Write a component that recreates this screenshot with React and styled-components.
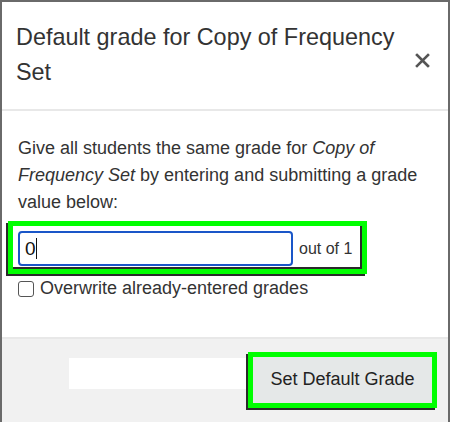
import React from "react";
import styled, { createGlobalStyle } from "styled-components";

const Global = createGlobalStyle`
  * { box-sizing: border-box; }
  body {
    margin: 0;
    background: #fff;
    font-family: "Liberation Sans", Arial, sans-serif;
  }
`;

const Modal = styled.div`
  width: 450px;
  height: 422px;
  display: flex;
  flex-direction: column;
  border: 2px solid #6a6a6a;
  border-bottom: none;
  background: #fff;
  overflow: hidden;
`;

const Header = styled.div`
  display: flex;
  align-items: center;
  justify-content: space-between;
  padding: 18px 18px 19px 14px;
  border-bottom: 2px solid #e8e8e8;
`;

const Title = styled.h4`
  margin: 0;
  font-size: 23.4px;
  line-height: 35px;
  font-weight: normal;
  color: #333;
  width: 390px;
`;

const Close = styled.button`
  border: none;
  background: none;
  padding: 0;
  margin-top: 10px;
  display: grid;
  place-items: center;
  color: #555;
  cursor: pointer;
`;

const Body = styled.div`
  padding: 24px 6px 0 6px;
  flex: 1;
`;

const Text = styled.p`
  margin: 0 0 5px 10px;
  font-size: 18px;
  line-height: 27px;
  color: #333;
`;

const Highlight = styled.div`
  border: 5px solid #00ff00;
  box-shadow: -2px 2px 0 #2a2a2a, inset -2px -2px 0 #2a2a2a;
  display: flex;
  align-items: center;
`;

const GradeRow = styled(Highlight)`
  width: 359px;
  padding: 5px 0 3px 5px;
  gap: 6px;
`;

const GradeInput = styled.div`
  width: 275px;
  height: 35px;
  border: 2px solid #1a56c8;
  border-radius: 4px;
  display: flex;
  align-items: center;
  padding-left: 5px;
  font-size: 19px;
  color: #111;
`;

const Caret = styled.span`
  display: inline-block;
  width: 1px;
  height: 21px;
  background: #111;
`;

const OutOf = styled.span`
  font-size: 16px;
  color: #333;
`;

const CheckRow = styled.label`
  display: flex;
  align-items: center;
  gap: 6px;
  margin: 4px 0 0 10px;
  font-size: 18px;
  color: #333;
`;

const Box = styled.span`
  width: 16px;
  height: 16px;
  border: 1px solid #555;
  border-radius: 3px;
  background: #fff;
`;

const Footer = styled.div`
  height: 85px;
  background: #f1f1f1;
  border-top: 2px solid #e8e8e8;
  display: flex;
  justify-content: flex-end;
  align-items: flex-start;
  padding: 13px 11px 0 0;
`;

const Blank = styled.div`
  width: 179px;
  height: 31px;
  margin-top: 6px;
  background: #fff;
`;

const ButtonFrame = styled(Highlight)`
  width: 189px;
  height: 56px;
`;

const Button = styled.button`
  flex: 1;
  height: 100%;
  border: none;
  background: #e5e8e8;
  font-family: inherit;
  font-size: 18px;
  color: #222;
  padding: 0 0 2px 0;
  cursor: pointer;
`;

export default function App() {
  return (
    <>
      <Global />
      <Modal>
        <Header>
          <Title>Default grade for Copy of Frequency Set</Title>
          <Close aria-label="Close">
            <svg width="15" height="15" viewBox="0 0 15 15">
              <path d="M2 2 L13 13 M13 2 L2 13" stroke="#555" strokeWidth="2.6" strokeLinecap="square" />
            </svg>
          </Close>
        </Header>
        <Body>
          <Text>
            Give all students the same grade for <i>Copy of Frequency Set</i> by entering and submitting a grade
            value below:
          </Text>
          <GradeRow>
            <GradeInput>
              0<Caret />
            </GradeInput>
            <OutOf>out of 1</OutOf>
          </GradeRow>
          <CheckRow>
            <Box />
            Overwrite already-entered grades
          </CheckRow>
        </Body>
        <Footer>
          <Blank />
          <ButtonFrame>
            <Button>Set Default Grade</Button>
          </ButtonFrame>
        </Footer>
      </Modal>
    </>
  );
}
